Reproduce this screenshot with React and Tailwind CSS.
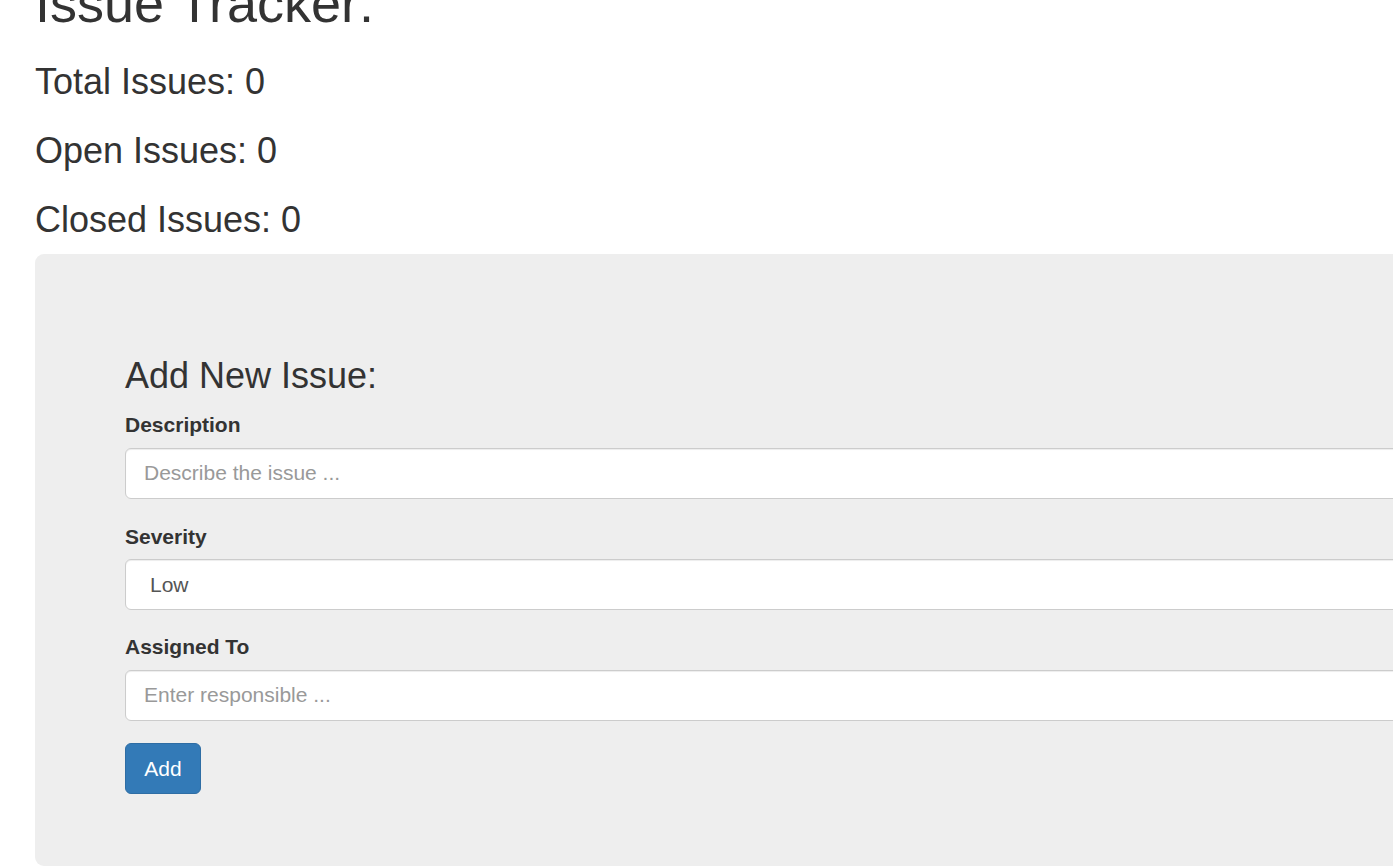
import { useState } from "react";

export default function App() {
  const [description, setDescription] = useState("");
  const [severity, setSeverity] = useState("Low");
  const [assignedTo, setAssignedTo] = useState("");

  const inputClass =
    "block w-full h-[51px] px-[18px] py-[9px] text-[21px] leading-[30px] text-[#555] bg-white border border-[#ccc] rounded-[6px] shadow-[inset_0_1px_1px_rgba(0,0,0,0.075)] placeholder:text-[#999] outline-none";

  return (
    <div className="w-[1393px] h-[868px] overflow-hidden bg-white font-['Liberation_Sans',Arial,sans-serif] text-[#333] text-[21px] leading-[30px]">
      <div className="ml-[35px] w-[1500px]">
        <h1 className="mt-[-26px] text-[54px] leading-[59px] font-normal">
          Issue Tracker:
        </h1>
        <h3 className="mt-[29px] text-[36px] leading-[39px]">Total Issues: 0</h3>
        <h3 className="mt-[30px] text-[36px] leading-[39px]">Open Issues: 0</h3>
        <h3 className="mt-[30px] mb-[15px] text-[36px] leading-[39px]">
          Closed Issues: 0
        </h3>

        {/* jumbotron */}
        <div className="bg-[#eee] rounded-[9px] px-[90px] pt-[72px] pb-[72px]">
          <form onSubmit={(e) => e.preventDefault()}>
            <h3 className="mt-[30px] mb-[15px] text-[36px] leading-[39px]">
              Add New Issue:
            </h3>

            <div className="mb-[23px]">
              <label className="inline-block mb-[7.5px] font-bold">Description</label>
              <input
                type="text"
                className={inputClass}
                placeholder="Describe the issue ..."
                value={description}
                onChange={(e) => setDescription(e.target.value)}
              />
            </div>

            <div className="mb-[22px]">
              <label className="inline-block mb-[7.5px] font-bold">Severity</label>
              <select
                className={inputClass + " pl-[20px]"}
                value={severity}
                onChange={(e) => setSeverity(e.target.value)}
              >
                <option>Low</option>
                <option>Medium</option>
                <option>High</option>
              </select>
            </div>

            <div className="mb-[22.5px]">
              <label className="inline-block mb-[7.5px] font-bold">Assigned To</label>
              <input
                type="text"
                className={inputClass}
                placeholder="Enter responsible ..."
                value={assignedTo}
                onChange={(e) => setAssignedTo(e.target.value)}
              />
            </div>

            <button
              type="submit"
              className="h-[51px] w-[76px] py-[9px] text-[21px] leading-[30px] text-white bg-[#337ab7] border border-[#2e6da4] rounded-[6px]"
            >
              Add
            </button>
          </form>
        </div>
      </div>
    </div>
  );
}
